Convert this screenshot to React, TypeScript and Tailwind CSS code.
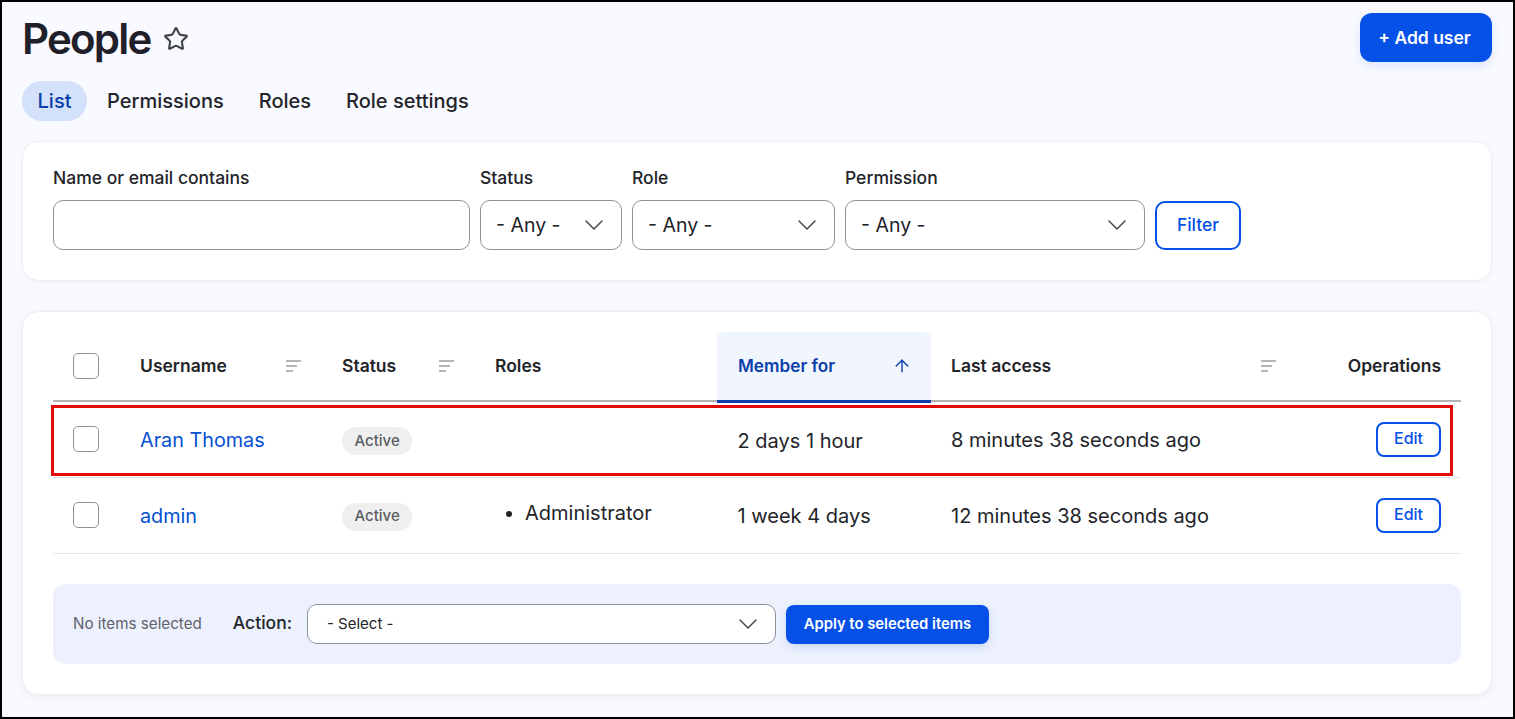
import { ArrowUp, Star } from 'lucide-react'

const SortIcon = () => (
  <svg width="16" height="12" viewBox="0 0 16 12" className="text-[#b5b5b9]" fill="currentColor">
    <rect x="0" y="0" width="15" height="2" />
    <rect x="0" y="5" width="11" height="2" />
    <rect x="0" y="10" width="7" height="2" />
  </svg>
)

const Chevron = () => (
  <svg width="18" height="10" viewBox="0 0 18 10" fill="none" stroke="#44464d" strokeWidth="1.5" strokeLinecap="round" strokeLinejoin="round">
    <path d="M1 1l8 8 8-8" />
  </svg>
)

const Checkbox = () => <div className="w-[26px] h-[26px] rounded-[5px] border border-[#8e929c] bg-white" />

const Select = ({ label, width }: { label: string; width: string }) => (
  <div className={`${width} h-[50px] flex items-center justify-between pl-[15px] pr-[18px] bg-white border border-[#8e929c] rounded-[10px] text-[19.5px] text-[#232429]`}>
    <span className="pt-[1px]">{label}</span>
    <Chevron />
  </div>
)

const EditButton = () => (
  <div className="w-[65px] h-[35px] flex items-center justify-center border-2 border-[#0550e6] rounded-[8px] text-[16px] font-medium text-[#0550e6] ml-auto pb-[2px]">
    Edit
  </div>
)

const ActiveBadge = () => (
  <span className="inline-flex items-center h-[28px] px-[12.5px] rounded-full bg-[#efefef] text-[15px] font-medium text-[#5b5d63]">Active</span>
)

const rows = [
  { name: 'Aran Thomas', role: '', member: '2 days 1 hour', access: '8 minutes 38 seconds ago' },
  { name: 'admin', role: 'Administrator', member: '1 week 4 days', access: '12 minutes 38 seconds ago' },
]

export default function App() {
  return (
    <div className="h-[719px] overflow-hidden border-2 border-black bg-[#f9faff] text-[#232429] font-['Inter',sans-serif]">
      <div className="pl-5 pr-[21px]">
        <div className="flex items-start justify-between pt-[11px] h-[79px]">
          <div className="flex items-center gap-[13px] h-[50px]">
            <h1 className="text-[42px] font-semibold tracking-[-1.8px] text-[#1f2029]">People</h1>
            <Star size={26} strokeWidth={2} className="text-[#44464d] mt-[2px]" />
          </div>
          <div className="w-[132px] h-[49px] flex items-center justify-center pt-[1px] pr-[3px] rounded-[12px] bg-[#0550e6] text-white text-[17.5px] font-semibold shadow-[0_4px_10px_rgba(5,80,230,0.12)]">
            + Add user
          </div>
        </div>

        <div className="flex items-center h-[40px] text-[20px] font-medium">
          <span className="h-[40px] w-[65px] flex items-center justify-center rounded-full bg-[#d3e1fa] text-[#0a3ea8]">List</span>
          <span className="ml-5">Permissions</span>
          <span className="ml-[35px]">Roles</span>
          <span className="ml-[35px]">Role settings</span>
        </div>

        <div className="mt-5 h-[140px] bg-white rounded-[16px] border border-[#eceef2] shadow-[0_1px_4px_rgba(0,0,0,0.04)] px-[30px] pt-[24px] flex items-start">
          <div className="flex gap-[10px] items-end">
            <div>
              <div className="text-[17.5px] font-medium mb-[10px] leading-[24px]">Name or email contains</div>
              <div className="w-[417px] h-[50px] bg-white border border-[#8e929c] rounded-[10px]" />
            </div>
            <div>
              <div className="text-[17.5px] font-medium mb-[10px] leading-[24px]">Status</div>
              <Select label="- Any -" width="w-[142px]" />
            </div>
            <div>
              <div className="text-[17.5px] font-medium mb-[10px] leading-[24px]">Role</div>
              <Select label="- Any -" width="w-[203px]" />
            </div>
            <div>
              <div className="text-[17.5px] font-medium mb-[10px] leading-[24px]">Permission</div>
              <Select label="- Any -" width="w-[300px]" />
            </div>
            <div className="w-[86px] h-[49px] flex items-center justify-center border-2 border-[#0550e6] rounded-[10px] text-[#0550e6] text-[17.5px] font-medium">
              Filter
            </div>
          </div>
        </div>

        <div className="mt-[30px] h-[384px] bg-white rounded-[16px] border border-[#eceef2] shadow-[0_2px_8px_rgba(0,0,0,0.06)] px-[30px] pt-[20px]">
          <div className="relative">
            <table className="w-[1408px] table-fixed border-collapse">
              <colgroup>
                <col className="w-[67px]" />
                <col className="w-[202px]" />
                <col className="w-[153px]" />
                <col className="w-[242px]" />
                <col className="w-[214px]" />
                <col className="w-[360px]" />
                <col className="w-[170px]" />
              </colgroup>
              <thead>
                <tr className="h-[69px] border-b-2 border-[#b3b3b3] text-[17.5px] font-semibold text-left">
                  <th className="pl-5"><Checkbox /></th>
                  <th className="pl-5 font-semibold">
                    <div className="flex items-center justify-between pr-[20px]">Username <SortIcon /></div>
                  </th>
                  <th className="pl-5 font-semibold">
                    <div className="flex items-center justify-between pr-[20px]">Status <SortIcon /></div>
                  </th>
                  <th className="pl-5 font-semibold">Roles</th>
                  <th className="pl-[21px] font-semibold text-[17.2px] bg-[#f1f5fe] rounded-t-[6px] border-b-[3px] border-[#0a3ea8] text-[#0a3ea8]">
                    <div className="flex items-center justify-between pr-[19px]">
                      Member for <ArrowUp size={20} strokeWidth={1.7} />
                    </div>
                  </th>
                  <th className="pl-5 font-semibold">
                    <div className="flex items-center justify-between pr-[14px]">Last access <SortIcon /></div>
                  </th>
                  <th className="pr-5 font-semibold text-right">Operations</th>
                </tr>
              </thead>
              <tbody>
                {rows.map(r => (
                  <tr key={r.name} className="h-[76px] border-b border-[#e6e6e8] text-[20px] text-[#232429]">
                    <td className="pl-5"><Checkbox /></td>
                    <td className="pl-5 pt-[4px] text-[19.8px] text-[#0550d0]">{r.name}</td>
                    <td className="pl-5"><ActiveBadge /></td>
                    <td className="pl-5 pt-[2px]">
                      {r.role && (
                        <ul className="list-disc pl-[30px] mt-[-6px]">
                          <li>{r.role}</li>
                        </ul>
                      )}
                    </td>
                    <td className="pl-[20.5px] pt-[2px]">{r.member}</td>
                    <td className="pl-5 pt-[2px]">{r.access}</td>
                    <td className="pr-5"><EditButton /></td>
                  </tr>
                ))}
              </tbody>
            </table>
            <div className="absolute left-[-2px] top-[73px] w-[1402px] h-[71px] border-[3px] border-[#e40a0a]" />
          </div>

          <div className="mt-[30px] h-[80px] bg-[#ecf1fd] rounded-[12px] flex items-center pl-5 w-[1408px]">
            <span className="text-[15.2px] pt-[2px] text-[#5f626b]">No items selected</span>
            <span className="ml-[31px] text-[17.5px] font-medium">Action:</span>
            <div className="ml-[15px] w-[469px] h-[40px] flex items-center justify-between pl-[19px] pr-[18px] bg-white border border-[#8e929c] rounded-[10px] text-[15px]">
              <span className="pt-[1px]">- Select -</span>
              <Chevron />
            </div>
            <div className="ml-[10px] mt-[2px] w-[203px] h-[39px] flex items-center justify-center rounded-[8px] bg-[#0550e6] text-white text-[14.8px] font-semibold shadow-[0_3px_8px_rgba(5,80,230,0.15)]">
              Apply to selected items
            </div>
          </div>
        </div>
      </div>
    </div>
  )
}
